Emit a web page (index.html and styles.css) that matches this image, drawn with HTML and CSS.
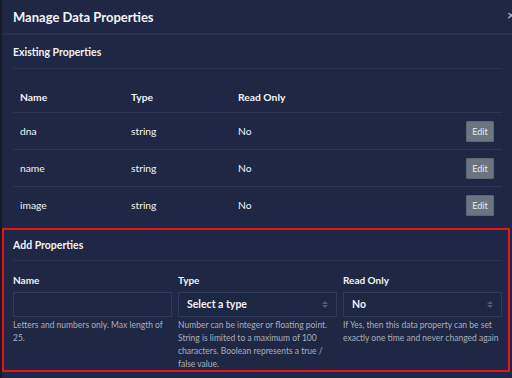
FILE: index.html
```html
<!DOCTYPE html>
<html lang="en">

<head>
    <meta charset="UTF-8">
    <title>Manage Data Properties</title>
    <link rel="stylesheet" href="styles.css">
</head>

<body>

    <div class="modal">
        <div class="modal-header">
            <h1>Manage Data Properties</h1>
            <span class="close">&times;</span>
        </div>

        <section class="existing">
            <h2>Existing Properties</h2>
            <table>
                <thead>
                    <tr>
                        <th class="col-name">Name</th>
                        <th class="col-type">Type</th>
                        <th>Read Only</th>
                        <th></th>
                    </tr>
                </thead>
                <tbody>
                    <tr>
                        <td>dna</td>
                        <td>string</td>
                        <td>No</td>
                        <td class="actions"><button class="btn-edit">Edit</button></td>
                    </tr>
                    <tr>
                        <td>name</td>
                        <td>string</td>
                        <td>No</td>
                        <td class="actions"><button class="btn-edit">Edit</button></td>
                    </tr>
                    <tr>
                        <td>image</td>
                        <td>string</td>
                        <td>No</td>
                        <td class="actions"><button class="btn-edit">Edit</button></td>
                    </tr>
                </tbody>
            </table>
        </section>

        <section class="add">
            <h2>Add Properties</h2>
            <div class="fields">
                <div class="field">
                    <label>Name</label>
                    <div class="control"></div>
                    <p class="help">Letters and numbers only. Max length of 25.</p>
                </div>
                <div class="field">
                    <label>Type</label>
                    <div class="control select">Select a type<span class="arrows"></span></div>
                    <p class="help">Number can be integer or floating point. String is limited to a maximum of 100 characters. Boolean represents a true / false value.</p>
                </div>
                <div class="field">
                    <label>Read Only</label>
                    <div class="control select">No<span class="arrows"></span></div>
                    <p class="help">If Yes, then this data property can be set exactly one time and never changed again</p>
                </div>
            </div>
        </section>
    </div>

</body>

</html>
```

FILE: styles.css
```css
body {
    margin: 0;
    background-color: #151a2b;
    overflow: hidden;
    height: 378px;
    font-family: "Lato", "Open Sans", sans-serif;
    color: #f1f3f7;
}

.modal {
    margin-left: 2px;
    width: 520px;
    height: 378px;
    background-color: #1f2744;
}

.modal-header {
    position: relative;
    height: 33px;
    border-bottom: 2px solid #283150;
    padding-left: 11px;
    display: flex;
    align-items: center;
}

h1 {
    margin: 0;
    font-size: 13px;
    font-weight: 700;
}

.close {
    position: absolute;
    left: 505px;
    top: 6px;
    font-size: 14px;
    color: #a7adbd;
    font-weight: 700;
}

h2 {
    margin: 0;
    font-size: 10.5px;
    font-weight: 700;
    display: flex;
    align-items: center;
}

.existing {
    width: 489px;
    padding: 0 11px;
}

.existing h2 {
    height: 33px;
    border-bottom: 1px solid #2a3351;
}

table {
    width: 100%;
    border-collapse: collapse;
    margin-top: 13px;
    font-size: 10.3px;
}

th {
    text-align: left;
    font-weight: 700;
    height: 30px;
    padding: 0 0 0 7px;
    border-bottom: 1px solid #2d3654;
}

.col-name {
    width: 104px;
}

.col-type {
    width: 100px;
}

td {
    height: 36px;
    padding: 0 0 0 7px;
    border-bottom: 1px solid #2d3654;
    color: #f1f3f7;
}

tbody tr:last-child td {
    border-bottom: none;
}

.actions {
    text-align: right;
    padding-right: 8px;
}

.btn-edit {
    width: 28px;
    height: 21px;
    padding: 0;
    border: 1px solid #5d6773;
    background-color: #6b7580;
    color: #e9ebee;
    font-family: inherit;
    font-size: 9px;
    border-radius: 1px;
}

.add {
    width: 489px;
    height: 140px;
    margin-top: 5px;
    border: 2px solid #e8141c;
    padding: 0 6px 0 9px;
}

.add h2 {
    height: 30px;
    border-bottom: 1px solid #2a3351;
}

.fields {
    display: grid;
    grid-template-columns: repeat(3, 1fr);
    gap: 6px;
    margin-top: 12px;
}

.field label {
    display: block;
    font-size: 10px;
    font-weight: 700;
    line-height: 14px;
    margin-bottom: 5px;
}

.control {
    position: relative;
    box-sizing: border-box;
    height: 25px;
    background-color: #1c2843;
    border: 1px solid #2c3c5d;
    font-size: 10.5px;
    font-weight: 700;
    line-height: 23px;
    padding-left: 8px;
}

.arrows {
    position: absolute;
    right: 8px;
    top: 8px;
    width: 0;
    height: 0;
    border-left: 3px solid transparent;
    border-right: 3px solid transparent;
    border-bottom: 3px solid #4f5a74;
}

.arrows::after {
    content: "";
    position: absolute;
    left: -3px;
    top: 4px;
    border-left: 3px solid transparent;
    border-right: 3px solid transparent;
    border-top: 3px solid #4f5a74;
}

.help {
    margin: 2px 0 0;
    font-size: 8.5px;
    line-height: 13px;
    color: #a9afbc;
}
```
